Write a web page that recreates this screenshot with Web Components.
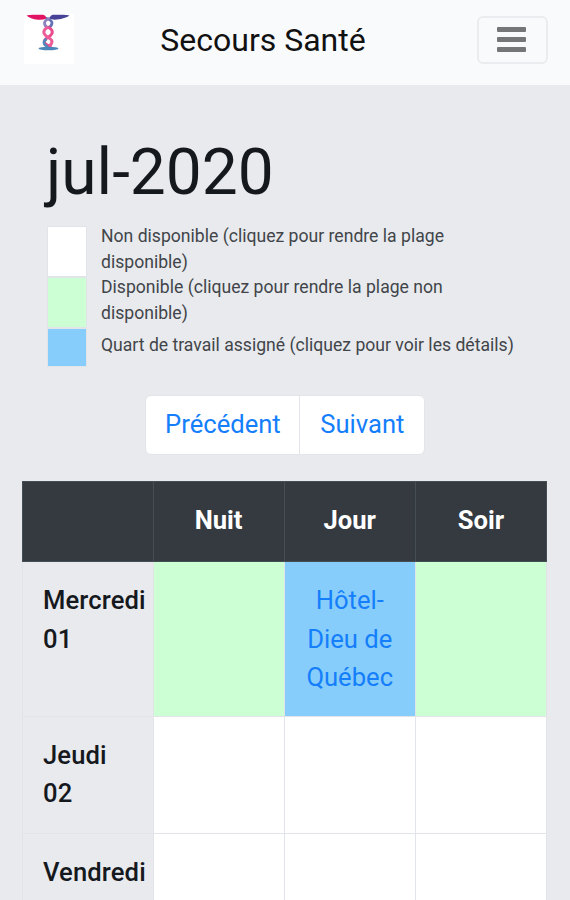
<!DOCTYPE html>
<html lang="fr">
<head>
<meta charset="utf-8">
<title>Secours Santé</title>
<style>
  html, body {
    margin: 0;
    height: 900px;
    overflow: hidden;
  }
  body {
    --page: #e8eaee;
    --line: #e1e4e8;
    --dark: #343a40;
    --link: #147efb;
    --free: #ccffd3;
    --assigned: #87cdfb;
    background: var(--page);
    color: #15191d;
    font: 25.6px/38.4px Roboto, "Liberation Sans", sans-serif;
  }
</style>
</head>
<body>
<app-navbar>
  <brand-logo slot="logo"></brand-logo>
  Secours Santé
  <menu-toggle slot="toggle"></menu-toggle>
</app-navbar>
<schedule-page>
  <span slot="title">jul-2020</span>
  <legend-item slot="legend">Non disponible (cliquez pour rendre la plage disponible)</legend-item>
  <legend-item slot="legend" kind="free">Disponible (cliquez pour rendre la plage non disponible)</legend-item>
  <legend-item slot="legend" kind="assigned">Quart de travail assigné (cliquez pour voir les détails)</legend-item>
  <month-pager slot="pager">
    <span slot="prev">Précédent</span>
    <span slot="next">Suivant</span>
  </month-pager>
  <shift-table></shift-table>
</schedule-page>

<script>
const DAYS = [
  { name: 'Mercredi', date: '01', shifts: ['free', 'assigned', 'free'], place: 'Hôtel-Dieu de Québec' },
  { name: 'Jeudi', date: '02', shifts: ['', '', ''] },
  { name: 'Vendredi', date: '03', shifts: ['', '', ''] },
];

function define(name, html, setup) {
  const template = document.createElement('template');
  template.innerHTML = html;
  customElements.define(name, class extends HTMLElement {
    constructor() {
      super();
      this.attachShadow({ mode: 'open' });
      this.shadowRoot.appendChild(template.content.cloneNode(true));
    }

    connectedCallback() {
      if (setup) setup(this, this.shadowRoot);
    }
  });
}

define('brand-logo', `
<style>
  :host { display: block; width: 50px; height: 50px; margin-bottom: 1px; background: #fff; }
  svg { display: block; }
</style>
<svg width="50" height="50" viewBox="0 0 50 50" fill="none" aria-hidden="true">
  <path d="M21.500 4Q28 6 28 9T24 14" stroke="#6672b8" stroke-width="2.800"/>
  <path d="M27 4Q20.500 6 20.500 9T24 14" stroke="#8a83bd" stroke-width="2.800"/>
  <path d="M24 13Q28.300 15.500 28.300 18T24 23.500Q20 25.500 20.300 28T27.500 33" stroke="#e94b8d" stroke-width="3"/>
  <path d="M24 13Q19.800 15.500 19.800 18T24 23.500Q28.300 25.500 28 28T25 32" stroke="#ed5b98" stroke-width="3"/>
  <path d="M22.500 25Q19.800 26.500 20 29T24 33" stroke="#5286bd" stroke-width="2.600"/>
  <path d="M2.500 1.500Q5 0.800 9 0.800H19.500Q22 1.500 22.300 4.500Q20 6 14 5.800Q6 5 2.500 1.500Z" fill="#e01462"/>
  <path d="M45.500 1.500Q43 0.800 39 0.800H28.500Q26 1.500 25.700 4.500Q28 6 33 5.500Q41 4.500 45.500 1.500Z" fill="#454297"/>
  <ellipse cx="24.500" cy="34.500" rx="10" ry="1.800" fill="#4b86b9"/>
</svg>
`);

define('menu-toggle', `
<style>
  :host { display: block; }
  button {
    display: flex;
    flex-direction: column;
    align-items: center;
    justify-content: center;
    gap: 5px;
    box-sizing: border-box;
    width: 71px;
    height: 48px;
    padding: 0 2px 0 0;
    border: 2px solid #ebecef;
    border-radius: 6px;
    background: none;
  }
  i { width: 29px; height: 5px; border-radius: 1px; background: #747677; }
</style>
<button type="button" aria-label="Menu"><i></i><i></i><i></i></button>
`);

define('app-navbar', `
<style>
  :host {
    display: flex;
    align-items: center;
    justify-content: space-between;
    box-sizing: border-box;
    height: 85px;
    padding: 0 22px 6px 24px;
    background: #f9fafc;
    color: #111;
    font-size: 32px;
  }
  /* the logo is narrower than the toggle, so the brand sits left of centre */
  .brand { padding: 2px 25px 0 0; }
</style>
<slot name="logo"></slot>
<div class="brand"><slot></slot></div>
<slot name="toggle"></slot>
`);

define('legend-item', `
<style>
  :host {
    display: grid;
    grid-template-columns: 40px 1fr;
    column-gap: 14px;
    align-items: center;
    min-height: 39px;
    color: #414549;
    font-size: 17.6px;
    line-height: 25.600px;
  }
  .swatch {
    align-self: stretch;
    border: 1px solid #e1e4e8;
    background: #fff;
  }
  .label { margin: -2px 0 2px; }
  :host([kind="free"]) .swatch { background: var(--free); }
  :host([kind="assigned"]) .swatch { background: var(--assigned); }
</style>
<div class="swatch"></div>
<div class="label"><slot></slot></div>
`);

define('month-pager', `
<style>
  :host { display: flex; justify-content: center; }
  button {
    box-sizing: border-box;
    height: 60px;
    border: 1px solid #e2e5e9;
    background: #fff;
    color: var(--link);
    font: inherit;
  }
  .prev { padding: 0 18.500px 2px 19px; border-radius: 6px 0 0 6px; }
  .next { padding: 0 19.500px 2px 20px; margin-left: -1px; border-radius: 0 6px 6px 0; }
</style>
<button type="button" class="prev"><slot name="prev"></slot></button>
<button type="button" class="next"><slot name="next"></slot></button>
`);

define('shift-table', `
<style>
  :host { display: block; }
  table {
    width: 525px;
    border-collapse: collapse;
    table-layout: fixed;
  }
  th, td {
    box-sizing: border-box;
    height: 117px;
    padding: 19px 20px;
    border: 1px solid var(--line);
    vertical-align: top;
  }
  thead th {
    height: 80px;
    border-color: #454d55;
    background: var(--dark);
    color: #fff;
    font-weight: 700;
    text-align: center;
  }
  tbody th {
    padding-right: 0;
    font-weight: 500;
    letter-spacing: 0.120px;
    text-align: left;
  }
  td { background: #fff; text-align: center; }
  td.free { background: var(--free); }
  td.assigned { background: var(--assigned); color: var(--link); }
</style>
<table>
  <colgroup><col style="width: 130.500px"><col><col><col></colgroup>
  <thead><tr><th></th><th>Nuit</th><th>Jour</th><th>Soir</th></tr></thead>
  <tbody></tbody>
</table>
`, (host, root) => {
  const body = root.querySelector('tbody');
  body.replaceChildren();
  for (const day of DAYS) {
    const row = body.insertRow();
    const head = document.createElement('th');
    head.append(day.name, document.createElement('br'), day.date);
    row.appendChild(head);
    for (const shift of day.shifts) {
      const cell = row.insertCell();
      cell.className = shift;
      if (shift === 'assigned') cell.textContent = day.place;
    }
  }
});

define('schedule-page', `
<style>
  :host { display: block; padding: 49px 22px 0; }
  header { padding: 0 25px; }
  h1 {
    margin: 0 0 15px -1px;
    font-size: 64px;
    font-weight: 400;
    line-height: 77px;
  }
  .legend { width: 470px; }
  .pager { padding: 28px 0 26px; }
</style>
<header>
  <h1><slot name="title"></slot></h1>
  <div class="legend"><slot name="legend"></slot></div>
</header>
<div class="pager"><slot name="pager"></slot></div>
<slot></slot>
`);
</script>
</body>
</html>
